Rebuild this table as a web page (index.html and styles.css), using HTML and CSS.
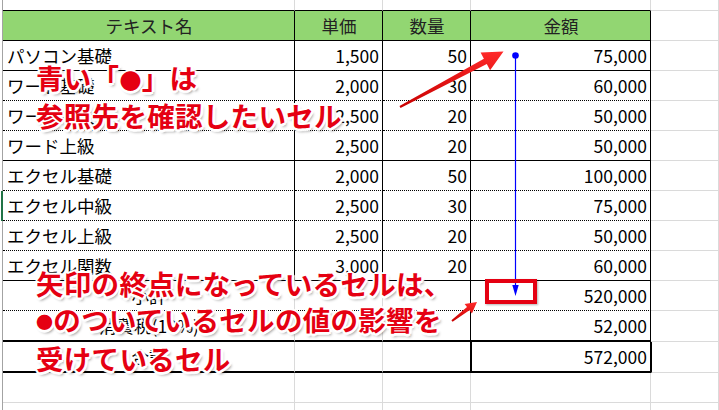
FILE: index.html
```html
<!DOCTYPE html>
<html lang="ja">
<head>
<meta charset="utf-8">
<title>参照先のトレース</title>
<link rel="stylesheet" href="styles.css">
</head>
<body>
<div class="sheet">
  <div class="grid">
    <!-- top partial row -->
    <div class="g"></div><div class="c top"></div><div class="c top"></div><div class="c top"></div><div class="c top"></div><div class="c"></div>
    <!-- header -->
    <div class="g"></div><div class="c h">テキスト名</div><div class="c h">単価</div><div class="c h">数量</div><div class="c h">金額</div><div class="c"></div>
    <!-- data -->
    <div class="g"></div><div class="c t bs">パソコン基礎</div><div class="c t num bs">1,500</div><div class="c t num bs">50</div><div class="c t num bs">75,000</div><div class="c"></div>
    <div class="g"></div><div class="c t bd">ワード基礎</div><div class="c t num bd">2,000</div><div class="c t num bd">30</div><div class="c t num bd">60,000</div><div class="c"></div>
    <div class="g"></div><div class="c t bd">ワード中級</div><div class="c t num bd">2,500</div><div class="c t num bd">20</div><div class="c t num bd">50,000</div><div class="c"></div>
    <div class="g"></div><div class="c t bs">ワード上級</div><div class="c t num bs">2,500</div><div class="c t num bs">20</div><div class="c t num bs">50,000</div><div class="c"></div>
    <div class="g"></div><div class="c t bd">エクセル基礎</div><div class="c t num bd">2,000</div><div class="c t num bd">50</div><div class="c t num bd">100,000</div><div class="c"></div>
    <div class="g sel"></div><div class="c t bd">エクセル中級</div><div class="c t num bd">2,500</div><div class="c t num bd">30</div><div class="c t num bd">75,000</div><div class="c"></div>
    <div class="g"></div><div class="c t bd">エクセル上級</div><div class="c t num bd">2,500</div><div class="c t num bd">20</div><div class="c t num bd">50,000</div><div class="c"></div>
    <div class="g"></div><div class="c t bs">エクセル関数</div><div class="c t num bs">3,000</div><div class="c t num bs">20</div><div class="c t num bs">60,000</div><div class="c"></div>
    <!-- totals -->
    <div class="g"></div><div class="c lbl bd">小計</div><div class="c bd"></div><div class="c t bd"></div><div class="c t num bd">520,000</div><div class="c"></div>
    <div class="g"></div><div class="c lbl bt">消費税(10%)</div><div class="c bt"></div><div class="c t bt"></div><div class="c t num bt">52,000</div><div class="c"></div>
    <div class="g"></div><div class="c lbl bt">合計</div><div class="c bt"></div><div class="c t bt"></div><div class="c t num bt tl">572,000</div><div class="c tl"></div>
    <!-- empty rows below -->
    <div class="g"></div><div class="c"></div><div class="c"></div><div class="c"></div><div class="c"></div><div class="c"></div>
    <div class="g"></div><div class="c"></div><div class="c"></div><div class="c"></div><div class="c"></div><div class="c"></div>
  </div>

  <svg class="overlay" width="719" height="410" viewBox="0 0 719 410" aria-hidden="true">
    <defs>
      <linearGradient id="red" x1="0" y1="0" x2="0" y2="1">
        <stop offset="0" stop-color="#ff2a2a"/>
        <stop offset="1" stop-color="#c80000"/>
      </linearGradient>
    </defs>
    <!-- blue trace arrow -->
    <g class="trace">
      <line x1="515.5" y1="55.5" x2="515.5" y2="287" stroke="#0000ff" stroke-width="1.2"/>
      <circle cx="515.5" cy="55.5" r="3.3" fill="#0000ff"/>
      <polygon points="512.3,285 518.7,285 515.5,296" fill="#0000ff"/>
    </g>
    <!-- red callout arrows -->
    <polygon class="callout" points="399.5,106.1 483.9,58.8 480.6,52.6 503.5,51.5 490.1,70.3 486.8,64.1 400.5,107.9" fill="url(#red)"/>
    <polygon class="callout" points="451.4,320.2 467.0,307.1 464.6,303.9 477,302 471.9,313.5 469.4,310.3 452.6,321.8" fill="url(#red)"/>
  </svg>

  <div class="redbox"></div>

  <p class="note note-a">青い「<span class="dot">●</span>」は<br>参照先を確認したいセル</p>
  <p class="note note-b">矢印の終点になっているセルは、<br><span class="dot dot-s">●</span>のついているセルの値の影響を<br>受けているセル</p>
</div>
</body>
</html>
```

FILE: styles.css
```css
html, body {
  margin: 0;
  padding: 0;
  background: #fff;
}

.sheet {
  position: relative;
  width: 719px;
  height: 410px;
  overflow: hidden;
  background: #fff;
}

.grid {
  display: grid;
  grid-template-columns: 3px 292px 88px 88px 180px 1fr;
  grid-template-rows: 11px repeat(10, 30px) 31px 31px 30px 30px;
  font-family: "Noto Sans CJK JP", "Noto Sans", sans-serif;
  font-size: 17.5px;
  color: #000;
}

.c {
  box-sizing: border-box;
  display: flex;
  align-items: center;
  padding: 0 3px 0 4px;
  white-space: nowrap;
  overflow: hidden;
  border-right: 1px solid #dadada;
  border-bottom: 1px solid #dadada;
  background: #fff;
}

.g {
  box-sizing: border-box;
  border-right: 1px solid #a3a3a3;
}

.g.sel {
  border-right: 2px solid #217346;
}

.top {
  border-bottom: 1px solid #000;
}

.h {
  background: #92d672;
  color: #222;
  justify-content: center;
  border-right: 1px solid #000;
  border-bottom: 1px solid #000;
}

.t {
  border-right: 1px solid #000;
}

.num {
  justify-content: flex-end;
}

.lbl {
  justify-content: center;
}

.bs { border-bottom: 1px solid #000; }
.bd { border-bottom: 1px dotted #000; }
.bt { border-bottom: 2px solid #000; }
.tl { border-left: 1px solid #000; }

.overlay {
  position: absolute;
  left: 0;
  top: 0;
  pointer-events: none;
}

.redbox {
  position: absolute;
  left: 485px;
  top: 279px;
  width: 52px;
  height: 25px;
  box-sizing: border-box;
  border: 4px solid #e50012;
  box-shadow: 1px 1px 2px rgba(0, 0, 0, 0.3);
}

.note {
  position: absolute;
  left: 36px;
  margin: 0;
  font-family: "Noto Sans CJK JP", sans-serif;
  font-weight: 700;
  font-size: 27.5px;
  line-height: 36px;
  letter-spacing: 0.3px;
  color: #e50012;
  white-space: nowrap;
  text-shadow:
    2px 0 0 #fff, -2px 0 0 #fff, 0 2px 0 #fff, 0 -2px 0 #fff,
    1.5px 1.5px 0 #fff, -1.5px 1.5px 0 #fff, 1.5px -1.5px 0 #fff, -1.5px -1.5px 0 #fff,
    3px 0 1px #fff, 0 3px 1px #fff,
    2px 3px 3px rgba(0, 0, 0, 0.45);
}

.dot {
  font-size: 0.8em;
}

.dot-s {
  font-size: 0.62em;
  vertical-align: 2px;
}

.note-a { top: 59px; }
.note-b { top: 265px; }
```
